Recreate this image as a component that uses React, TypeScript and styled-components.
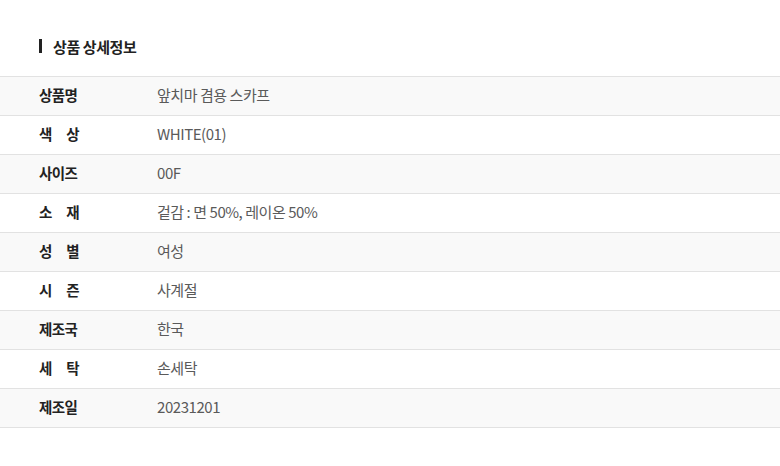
import styled, { createGlobalStyle } from "styled-components";

// Types
interface SpecRow {
  label: string;
  value: string;
  spaced?: boolean;
}

const GlobalStyle = createGlobalStyle`
  body {
    margin: 0;
    background: #ffffff;
    font-family: "Noto Sans CJK KR", "Noto Sans", sans-serif;
  }
`;

const Section = styled.section`
  padding-top: 36px;
`;

const Heading = styled.h2`
  display: flex;
  align-items: center;
  gap: 11px;
  margin: 0 0 20px;
  padding-left: 39px;
  height: 20px;
  font-size: 15px;
  font-weight: 700;
  color: #222222;
  letter-spacing: -0.4px;

  &::before {
    content: "";
    width: 3px;
    height: 14px;
    background: #222222;
  }
`;

const Table = styled.div`
  border-top: 1px solid #e2e2e2;
`;

// 38px of content + 1px bottom rule
const Row = styled.div<{ $shaded: boolean }>`
  display: flex;
  align-items: center;
  box-sizing: border-box;
  height: 39px;
  padding: 0 0 3px 39px;
  border-bottom: 1px solid #e2e2e2;
  background: ${(p) => (p.$shaded ? "#f9f9f9" : "#ffffff")};
  line-height: 20px;
`;

const Label = styled.div<{ $spaced?: boolean }>`
  width: 40px;
  margin-right: 78px;
  font-size: 14.5px;
  font-weight: 700;
  color: #222222;
  letter-spacing: -0.6px;
  white-space: nowrap;
  text-align: ${(p) => (p.$spaced ? "justify" : "left")};
  text-align-last: ${(p) => (p.$spaced ? "justify" : "auto")};
`;

const Value = styled.div`
  font-size: 15px;
  font-weight: 400;
  color: #5a5a5a;
  letter-spacing: -0.45px;
`;

const rows: SpecRow[] = [
  { label: "상품명", value: "앞치마 겸용 스카프" },
  { label: "색 상", value: "WHITE(01)", spaced: true },
  { label: "사이즈", value: "00F" },
  { label: "소 재", value: "겉감 : 면 50%, 레이온 50%", spaced: true },
  { label: "성 별", value: "여성", spaced: true },
  { label: "시 즌", value: "사계절", spaced: true },
  { label: "제조국", value: "한국" },
  { label: "세 탁", value: "손세탁", spaced: true },
  { label: "제조일", value: "20231201" },
];

export default function App() {
  return (
    <>
      <GlobalStyle />
      <Section>
        <Heading>상품 상세정보</Heading>
        <Table>
          {rows.map((row, i) => (
            <Row key={row.label} $shaded={i % 2 === 0}>
              <Label $spaced={row.spaced}>{row.label}</Label>
              <Value>{row.value}</Value>
            </Row>
          ))}
        </Table>
      </Section>
    </>
  );
}
